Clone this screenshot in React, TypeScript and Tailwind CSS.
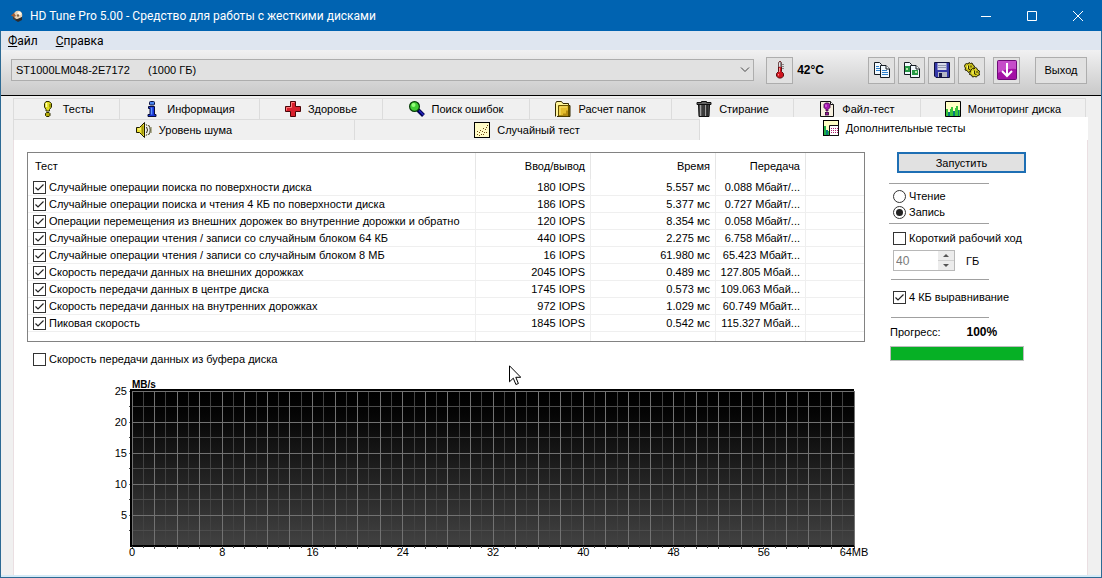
import React, { useState } from "react";

type IconProps = { children: React.ReactNode };

function Icon({ children }: IconProps) {
  return (
    <svg viewBox="0 0 16 16" aria-hidden="true" className="size-4 shrink-0">
      {children}
    </svg>
  );
}

const appIcon = (
  <Icon>
    <path d="M4 6 L8 3 L13 5 L13 11 L8 13 L4 11Z" fill="#4a4038" />
    <circle cx="9" cy="7" r="4.3" fill="#e9d2b4" />
    <circle cx="10.5" cy="5.5" r="2" fill="#fff6e6" />
    <circle cx="9" cy="7.5" r="1.2" fill="#7a6048" />
    <path d="M2 7.5 L5 5 L7 8 L5 9Z" fill="#a35d35" />
    <path d="M6 12 L13 9 L13 12 L9 14Z" fill="#2b2b2e" />
  </Icon>
);

const testIcon = (
  <Icon>
    <path d="M6 .5h3l2.500 2v3.500L9.500 8.500v1.500H6V8.500L4.500 6v-3.500Z" fill="#e0dc20" stroke="#2a2a00" />
    <path d="M6.500 2v4" stroke="#fffdb0" strokeWidth="1.500" />
    <path d="M10 3v3.500" stroke="#918c00" strokeWidth="1.500" />
    <path d="M5.500 12.500l1-1h2.500l1 1v2l-1 1h-2.500l-1-1Z" fill="#b6ac08" stroke="#2a2a00" />
  </Icon>
);

const infoIcon = (
  <Icon>
    <rect x="5.500" y=".5" width="5" height="3.500" rx="1" fill="#4a86f0" stroke="#0a1140" />
    <path d="M4.500 5.500h6v8h1.500v2h-8v-2h2v-6h-1.500Z" fill="#1836d8" stroke="#070d3a" />
    <path d="M7.500 6.500v7" stroke="#5e95ff" strokeWidth="1.500" />
  </Icon>
);

const healthIcon = (
  <Icon>
    <path d="M5.500 .5h5v5h5v5h-5v5h-5v-5h-5v-5h5Z" fill="#d8202c" stroke="#4a0508" />
    <path d="M6.500 6.500V1.500h3M1.500 9.500v-3h5" stroke="#ff7c7c" fill="none" />
  </Icon>
);

const searchIcon = (
  <Icon>
    <path d="M9 9l5.500 5.500" stroke="#000050" strokeWidth="4" />
    <path d="M10 9.500l4.500 4.500" stroke="#2525c0" strokeWidth="1.500" />
    <circle cx="5.500" cy="5.500" r="4.900" fill="#42ce35" stroke="#073b07" strokeWidth="1.200" />
    <circle cx="4.500" cy="4" r="2" fill="#94ff7b" />
  </Icon>
);

const folderIcon = (
  <Icon>
    <path d="M.5 15.500v-13l1-2h5l1.500 2h5.500v3" fill="#fff59a" stroke="#332900" />
    <path d="M13.500 4.500h1.500v11H2" fill="#8c7208" stroke="#332900" />
    <path d="M3.500 4.500h10v10.500H3.500Z" fill="#e3bd2e" stroke="#665100" />
    <path d="M5 14V6h7" fill="none" stroke="#fae574" />
    <path d="M8 13.500h4v-4" fill="none" stroke="#b48b12" strokeWidth="2" />
  </Icon>
);

const trashIcon = (
  <Icon>
    <path d="M2.500 3.500h11l-.5 12H3Z" fill="#4a4a4a" stroke="#111" />
    <path d="M5 4v11" stroke="#dcdcdc" strokeWidth="1.200" />
    <path d="M7 4v11" stroke="#8c8c8c" />
    <path d="M9.500 4v11" stroke="#a0a0a0" strokeWidth="1.500" />
    <path d="M6 4v11M8 4v11M11 4v11" stroke="#111" />
    <path d="M5.500 .5h5v1h4.500v2H1v-2h4.500Z" fill="#666" stroke="#111" />
  </Icon>
);

const fileTestIcon = (
  <Icon>
    <path d="M1.500 .5h10l3 3v12h-13Z" fill="#f7f0df" stroke="#111" />
    <path d="M11.500 .5v3h3" fill="#fff" stroke="#111" />
    <path d="M6.500 2h3l1.500 1.500v3l-2 2v1.500H7V8.500L5 6.500v-3Z" fill="#a51cae" stroke="#330038" strokeWidth=".8" />
    <path d="M7 3.500v2.500" stroke="#ed70f5" strokeWidth="1.200" />
    <rect x="6.500" y="11.500" width="3" height="2.500" fill="#961399" stroke="#330038" strokeWidth=".8" />
  </Icon>
);

const monitorIcon = (
  <Icon>
    <path d="M.5 .5h15v15h-15Z" fill="#ffffc4" />
    <path d="M1 15V8h2v3h2V8h1V6h2v4h2V7h1V5h2v4h2v6Z" fill="#38c53a" />
    <path d="M3 15v-4h2v4M8 15v-5h2v5M13 15V9h1v6" fill="#087b7b" />
    <path d="M.5 .5h15v15h-15Z" fill="none" stroke="#000" />
  </Icon>
);

const noiseIcon = (
  <Icon>
    <path d="M.5 5.500h3l5-5v15l-5-5h-3Z" fill="#eee235" stroke="#1c1900" />
    <path d="M6.500 3.500v9" stroke="#9c9108" strokeWidth="2" />
    <path d="M2 7h3" stroke="#ffffa8" />
    <path d="M10.500 5q2 3 0 6M12.500 3q3.500 5 0 10" fill="none" stroke="#302d10" />
    <path d="M10 2l1 2M10 14l1-2M15 5v6" stroke="#777442" />
  </Icon>
);

const randomIcon = (
  <Icon>
    <rect x=".5" y=".5" width="15" height="15" fill="#fffbc6" stroke="#000" />
    <path
      d="M3 12.500h1M5 10.500h1M7 12.500h1M8 9.500h1M10 10.500h1M11 7.500h1M12 5.500h1M5 13.500h1M3 9.500h1M9 12.500h1M12 10.500h1M6 8.500h1M13 3.500h1M9 6.500h1"
      stroke="#6e4812"
    />
  </Icon>
);

const extraIcon = (
  <Icon>
    <rect x=".5" y=".5" width="15" height="15" fill="#ffffc4" stroke="#000" />
    <path d="M1 15V6h2v5h3v4Z" fill="#20b345" />
    <path d="M3 15v-5h2v5Z" fill="#087b7b" />
    <path d="M6.500 5.500h9v10h-9Z" fill="#fff" stroke="#111" />
    <path d="M8 8.500h7M8 10.500h7M8 12.500h7" stroke="#b02070" strokeDasharray="1 1" />
  </Icon>
);

const thermometerIcon = (
  <svg viewBox="0 0 16 18" aria-hidden="true" className="h-[18px] w-4 shrink-0">
    <path d="M6.500 1.500l1-1h1l1 1v9l2 2v2.500l-2 2h-3l-2-2v-2.500l2-2Z" fill="#d0141e" stroke="#5b1114" />
    <path d="M6.500 1h3v5h-3Z" fill="#8b8b8b" />
    <path d="M7.500 1.500v4" stroke="#e4e4e4" />
    <path d="M7.500 7v4M6.500 13v1.500" stroke="#ff9292" />
    <path d="M10 3.500h2M10 5.500h2M10 7.500h2" stroke="#888" />
  </svg>
);

function Pages({ pictures }: { pictures: boolean }) {
  return (
    <Icon>
      <path d="M.5 .5h5l2 2v10h-7Z" fill="#f2faff" stroke="#151b22" />
      <path d="M6.500 3.500h5.500l3.500 3.500v8.500h-9Z" fill="#f2faff" stroke="#151b22" />
      <path d="M12 3.500V7h3.500" fill="#fff" stroke="#151b22" />
      {pictures ? (
        <>
          <path d="M1 4h5v6H1ZM8 8h6v5H8Z" fill="#279a47" />
          <path d="M2 6h2v2H2ZM11 9h2v2h-2Z" fill="#b6e8a8" />
        </>
      ) : (
        <path d="M2 4.500h3M2 6.500h4M2 8.500h4M8 8.500h5M8 10.500h6M8 12.500h6" stroke="#2f80cc" />
      )}
    </Icon>
  );
}

const saveIcon = (
  <Icon>
    <path d="M.5 .5h15v15h-13.500l-1.500-1.500Z" fill="#3538a8" stroke="#10103c" />
    <path d="M3.500 1h9v7h-9Z" fill="#d9dcea" />
    <path d="M4 3.500h8M4 5.500h8" stroke="#9298b0" />
    <path d="M4 10h9v5H4Z" fill="#b5b8c6" />
    <path d="M5 11h3v4H5Z" fill="#17174a" />
  </Icon>
);

const gearsIcon = (
  <Icon>
    <path
      d="M1 2.500l1.500-1L4 2l1-1.500 1.500 1L8 1l1 2 1.500 1-.5 2-.5 3-2 1-1.500-.5-1.500 1-1.500-2-2-.5.5-2-1-1.500Z"
      fill="#cbc21c"
      stroke="#242000"
    />
    <path
      d="M7 8l1.500-1.500L10 7l1.500-1.500 1.500 1 .5 1.500 2 1-.5 2 .5 2-2 .5-1 1.500-2-.5-2 .5-1-2-2-.5.5-2Z"
      fill="#d8cf20"
      stroke="#242000"
    />
    <path d="M4.500 3.500v3.500l2 1M10.500 8.500v3.500l2 .5M7 3.500v2M13 9v2" stroke="#302c00" fill="none" />
    <path d="M3.500 3.500v3M9 9v3" stroke="#fff770" />
  </Icon>
);

const downloadIcon = (
  <svg viewBox="0 0 20 20" aria-hidden="true" className="size-5 shrink-0">
    <rect x=".5" y=".5" width="19" height="19" rx="1" fill="#a312a5" stroke="#6d0b76" />
    <path d="M1 1h18v8Q10 8 1 13Z" fill="#c64cc9" />
    <path d="M10 3v13M5 11l5 5 5-5" fill="none" stroke="#fff" strokeWidth="2" />
  </svg>
);

const upperTabs = [
  { label: "Тесты", icon: testIcon },
  { label: "Информация", icon: infoIcon },
  { label: "Здоровье", icon: healthIcon },
  { label: "Поиск ошибок", icon: searchIcon },
  { label: "Расчет папок", icon: folderIcon },
  { label: "Стирание", icon: trashIcon },
  { label: "Файл-тест", icon: fileTestIcon },
  { label: "Мониторинг диска", icon: monitorIcon },
];

const lowerTabs = [
  { label: "Уровень шума", icon: noiseIcon },
  { label: "Случайный тест", icon: randomIcon },
];

const results = [
  ["Случайные операции поиска по поверхности диска", "180 IOPS", "5.557 мс", "0.088 Мбайт/..."],
  ["Случайные операции поиска и чтения 4 КБ по поверхности диска", "186 IOPS", "5.377 мс", "0.727 Мбайт/..."],
  ["Операции перемещения из внешних дорожек во внутренние дорожки и обратно", "120 IOPS", "8.354 мс", "0.058 Мбайт/..."],
  ["Случайные операции чтения / записи со случайным блоком 64 КБ", "440 IOPS", "2.275 мс", "6.758 Мбайт/..."],
  ["Случайные операции чтения / записи со случайным блоком 8 МБ", "16 IOPS", "61.980 мс", "65.423 Мбайт..."],
  ["Скорость передачи данных на внешних дорожках", "2045 IOPS", "0.489 мс", "127.805 Мбай..."],
  ["Скорость передачи данных в центре диска", "1745 IOPS", "0.573 мс", "109.063 Мбай..."],
  ["Скорость передачи данных на внутренних дорожках", "972 IOPS", "1.029 мс", "60.749 Мбайт..."],
  ["Пиковая скорость", "1845 IOPS", "0.542 мс", "115.327 Мбай..."],
];

function CheckBox({ label, checked = false }: { label: string; checked?: boolean }) {
  return (
    <label className="flex items-center gap-[3px] whitespace-nowrap">
      <span className="relative block size-[13px] shrink-0">
        <input
          type="checkbox"
          defaultChecked={checked}
          className="peer block size-[13px] appearance-none border border-[#333] bg-white"
        />
        <svg
          viewBox="0 0 13 13"
          aria-hidden="true"
          className="pointer-events-none absolute inset-0 hidden size-[13px] peer-checked:block"
        >
          <path d="M2.500 6.500l2.500 2.500 5.500-5.500" fill="none" stroke="#222" strokeWidth="1.200" />
        </svg>
      </span>
      {label}
    </label>
  );
}

function RadioButton({ label, checked = false }: { label: string; checked?: boolean }) {
  return (
    <label className="flex h-4 items-center gap-[3px]">
      <span className="relative block size-[13px] shrink-0">
        <input
          type="radio"
          name="mode"
          defaultChecked={checked}
          className="peer block size-[13px] appearance-none rounded-full border border-[#333] bg-white"
        />
        <span className="pointer-events-none absolute inset-[3px] hidden rounded-full bg-[#222] peer-checked:block" />
      </span>
      {label}
    </label>
  );
}

function ToolButton({ label, children }: { label: string; children: React.ReactNode }) {
  return (
    <button
      aria-label={label}
      className="flex size-[27px] items-center justify-center border border-[#adadad] bg-[#e1e1e1]"
    >
      {children}
    </button>
  );
}

function Tab({ label, icon }: { label: string; icon: React.ReactNode }) {
  return (
    <button
      role="tab"
      aria-selected="false"
      className="flex h-[21px] items-center justify-center gap-[7px] border-t border-r border-[#dcdcdc] bg-[#f0f0f0] whitespace-nowrap"
    >
      {icon}
      {label}
    </button>
  );
}

function Chart() {
  const columns = Array.from({ length: 65 }, (_, i) => i);
  const rows = Array.from({ length: 11 }, (_, i) => i);
  const minorColumns = columns.filter((i) => i % 2 === 1);
  const majorColumns = columns.filter((i) => i % 2 === 0);
  const at = (i: number, n: number) => `${(i / n) * 100}%`;
  return (
    <svg
      role="img"
      aria-label="MB/s"
      className="block h-[155px] w-full overflow-visible font-['Liberation_Sans',sans-serif] text-[11px]"
    >
      <defs>
        <linearGradient id="plot" x1="0" y1="0" x2="0" y2="1">
          <stop offset="0" stopColor="#000" />
          <stop offset=".15" stopColor="#050505" />
          <stop offset="1" stopColor="#424242" />
        </linearGradient>
      </defs>
      <g shapeRendering="crispEdges">
        <svg x="-1" y="-1" width="100%" height="100%" overflow="visible">
          <rect width="100%" height="100%" fill="#000" stroke="#000" strokeWidth="2" />
          <rect x="1" y="2" width="100%" height="100%" fill="#000" />
        </svg>
        <rect width="100%" height="100%" fill="url(#plot)" />
        {minorColumns.map((i) => (
          <line key={i} x1={at(i, 64)} x2={at(i, 64)} y1="0" y2="100%" stroke="#424242" />
        ))}
        {rows.filter((i) => i % 2 === 1).map((i) => (
          <line key={i} x1="-3" x2="100%" y1={at(i, 10)} y2={at(i, 10)} stroke="#4c4c4c" />
        ))}
        {majorColumns.map((i) => (
          <line key={i} x1={at(i, 64)} x2={at(i, 64)} y1="0" y2="100%" stroke="#727272" />
        ))}
        {rows.filter((i) => i % 2 === 0 && i < 10).map((i) => (
          <line key={i} x1="-3" x2="100%" y1={at(i, 10)} y2={at(i, 10)} stroke="#727272" />
        ))}
        <line x1="-1" x2="-1" y1="-2" y2="100%" stroke="#000" strokeWidth="2" />
        <svg y="100%" width="100%" height="4" overflow="visible">
          <line x1="-2" x2="100%" y1="0" y2="0" stroke="#000" strokeWidth="2" />
          {columns.map((i) => (
            <line key={i} x1={at(i, 64)} x2={at(i, 64)} y1="0" y2={i % 2 ? 2 : 3} stroke="#444" />
          ))}
        </svg>
      </g>
      <text x="0" y="-3" fontWeight="bold" fontSize="10">MB/s</text>
      {[25, 20, 15, 10, 5].map((n, i) => (
        <text key={n} x="-5" y={at(i, 5)} dy="4" textAnchor="end">{n}</text>
      ))}
      {[0, 8, 16, 24, 32, 40, 48, 56, 64].map((n) => (
        <text key={n} x={at(n, 64)} y="100%" dy="10" textAnchor="middle">
          {n === 64 ? "64MB" : n}
        </text>
      ))}
    </svg>
  );
}

export default function App() {
  const [size, setSize] = useState(40);
  return (
    <div className="relative flex min-h-screen flex-col border-r border-b border-l border-[#2d6a94] bg-[#f0f0f0] font-['Liberation_Sans',sans-serif] text-[11px] leading-4 text-black">
      <header className="-mx-px flex h-[31px] items-center bg-[#0063b1] pl-[9px] font-['Roboto',sans-serif] text-[12px] text-white">
        {appIcon}
        <h1 className="ml-[5px] flex-1 whitespace-nowrap">HD Tune Pro 5.00 - Средство для работы с жесткими дисками</h1>
        <button aria-label="Свернуть" className="flex h-full w-[46px] items-center justify-center">
          <svg viewBox="0 0 10 10" className="size-2.5"><path d="M0 5.500h10" stroke="#fff" /></svg>
        </button>
        <button aria-label="Развернуть" className="flex h-full w-[46px] items-center justify-center">
          <svg viewBox="0 0 10 10" className="size-2.5"><path d="M.5 .5h9v9h-9Z" stroke="#fff" fill="none" /></svg>
        </button>
        <button aria-label="Закрыть" className="mr-px flex h-full w-[46px] items-center justify-center">
          <svg viewBox="0 0 10 10" className="size-2.5"><path d="M0 0l10 10M10 0L0 10" stroke="#fff" /></svg>
        </button>
      </header>

      <nav className="flex h-[19px] items-center gap-[18px] bg-[#dfe6f0] pl-[7px] font-['Roboto',sans-serif] text-[12px]">
        <button><u>Ф</u>айл</button>
        <button><u>С</u>правка</button>
      </nav>

      <div className="flex h-[46px] items-center border-b border-black bg-linear-to-b from-[#f1f1f2] to-[#c9c9c9] pr-[14px] pb-[5px] pl-[10px]">
        <div className="relative flex-1">
          <select
            aria-label="Диск"
            className="block h-[22px] w-full appearance-none border border-[#adadad] bg-[#e1e1e1] px-1"
          >
            <option>{"ST1000LM048-2E7172\u00a0\u00a0\u00a0\u00a0\u00a0\u00a0(1000 ГБ)"}</option>
          </select>
          <svg viewBox="0 0 10 6" aria-hidden="true" className="pointer-events-none absolute top-2 right-1 h-1.5 w-2.5">
            <path d="M1 .5l4 4 4-4" fill="none" stroke="#444" />
          </svg>
        </div>
        <div className="ml-3 flex items-center gap-1">
          <ToolButton label="Температура">{thermometerIcon}</ToolButton>
          <span className="text-[12px] font-bold">42°C</span>
        </div>
        <div className="ml-11 flex gap-[3px]">
          <ToolButton label="Копировать текст"><Pages pictures={false} /></ToolButton>
          <ToolButton label="Копировать снимок"><Pages pictures /></ToolButton>
          <ToolButton label="Сохранить">{saveIcon}</ToolButton>
          <ToolButton label="Настройки">{gearsIcon}</ToolButton>
        </div>
        <div className="ml-2 flex gap-[15px]">
          <ToolButton label="Скачать">{downloadIcon}</ToolButton>
          <button className="h-[27px] w-[52px] border border-[#adadad] bg-[#e1e1e1]">Выход</button>
        </div>
      </div>

      <div className="flex flex-1 flex-col border-b-2 border-[#d5ebf7] pt-0.5 pr-[13px] pl-3">
        <div role="tablist">
          <div className="mr-0.5 grid grid-cols-[106fr_140fr_123fr_147fr_142fr_122fr_127fr_165fr] border-l border-[#dcdcdc]">
            {upperTabs.map((tab) => (
              <Tab key={tab.label} {...tab} />
            ))}
          </div>
          <div className="grid grid-cols-[341fr_345fr_388fr] border-l border-[#dcdcdc]">
            {lowerTabs.map((tab) => (
              <Tab key={tab.label} {...tab} />
            ))}
            <button
              role="tab"
              aria-selected="true"
              className="-mt-0.5 flex items-center justify-center gap-[7px] bg-white pb-0.5 whitespace-nowrap"
            >
              {extraIcon}
              {"Дополнительные тесты"}
            </button>
          </div>
        </div>

        <main className="flex flex-1 gap-6 border-r border-l border-[#eadfe2] bg-white pt-3 pr-[61px] pl-[13px]">
          <section className="min-w-0 flex-1">
            <div className="h-[190px] border border-[#828282]">
              <table className="w-full table-fixed border-separate border-spacing-0 whitespace-nowrap">
                <colgroup>
                  <col />
                  <col className="w-[115px]" />
                  <col className="w-[125px]" />
                  <col className="w-[90px]" />
                  <col className="w-[58px]" />
                </colgroup>
                <thead>
                  <tr className="h-[26px] [&>th]:border-r [&>th]:border-[#e6e6e6] [&>th]:p-0 [&>th]:font-normal [&>th:last-child]:border-0">
                    <th className="text-left"><span className="pl-[7px]">Тест</span></th>
                    <th className="text-right"><span className="pr-[5px]">Ввод/вывод</span></th>
                    <th className="text-right"><span className="pr-[5px]">Время</span></th>
                    <th className="text-right"><span className="pr-[5px]">Передача</span></th>
                    <th />
                  </tr>
                </thead>
                <tbody className="[&_td]:border-r [&_td]:border-[#efefef] [&_td:last-child]:border-r-0">
                  {results.map(([name, io, time, rate]) => (
                    <tr key={name} className="h-[17px] [&>td]:border-b [&>td]:p-0">
                      <td><div className="pl-[5px]"><CheckBox label={name} checked /></div></td>
                      <td className="text-right"><span className="pr-[5px]">{io}</span></td>
                      <td className="text-right"><span className="pr-[5px]">{time}</span></td>
                      <td className="text-right"><span className="pr-[5px]">{rate}</span></td>
                      <td />
                    </tr>
                  ))}
                  <tr aria-hidden="true" className="h-[9px] [&>td]:p-0">
                    <td /><td /><td /><td /><td />
                  </tr>
                </tbody>
              </table>
            </div>
            <div className="mt-[9px] pl-1.5">
              <CheckBox label="Скорость передачи данных из буфера диска" />
            </div>
            <div className="mt-6 mr-[11px] mb-6 ml-[105px]">
              <Chart />
            </div>
          </section>

          <aside className="w-[137px] shrink-0">
            <button className="ml-2 block h-[21px] w-[129px] border-2 border-[#1e6fb4] bg-[#e1e1e1] leading-4">
              Запустить
            </button>
            <fieldset className="mt-2.5 w-[100px] border-t border-b border-[#a0a0a0] pt-1 pb-[3px] pl-1">
              <RadioButton label="Чтение" />
              <RadioButton label="Запись" checked />
            </fieldset>
            <div className="mt-1.5 pl-1">
              <CheckBox label="Короткий рабочий ход" />
            </div>
            <div className="mt-1 flex items-center gap-[11px] pl-1">
              <div className="flex h-[21px] w-[62px] border border-[#b8b8b8] bg-white">
                <input
                  id="capacity"
                  type="text"
                  value={size}
                  readOnly
                  className="w-0 flex-1 pl-0.5 text-[12px] text-[#7a7a7a]"
                />
                <div className="flex w-4 flex-col bg-[#ececec]">
                  <button
                    aria-label="Увеличить"
                    onClick={() => setSize(size + 1)}
                    className="flex flex-1 items-center justify-center border-b border-[#d0d0d0]"
                  >
                    <svg viewBox="0 0 6 3" className="h-[3px] w-1.5"><path d="M0 3l3-3 3 3Z" fill="#555" /></svg>
                  </button>
                  <button
                    aria-label="Уменьшить"
                    onClick={() => setSize(Math.max(1, size - 1))}
                    className="flex flex-1 items-center justify-center"
                  >
                    <svg viewBox="0 0 6 3" className="h-[3px] w-1.5"><path d="M0 0l3 3 3-3Z" fill="#555" /></svg>
                  </button>
                </div>
              </div>
              <label htmlFor="capacity">ГБ</label>
            </div>
            <hr className="mt-2 ml-0.5 w-[98px] border-[#a0a0a0]" />
            <div className="mt-[9px] pl-1">
              <CheckBox label="4 КБ выравнивание" checked />
            </div>
            <hr className="mt-3 ml-0.5 w-[98px] border-[#a0a0a0]" />
            <div className="mt-1.5 flex items-center gap-[26px] pl-px">
              <span>Прогресс:</span>
              <span className="text-[12px] font-bold">100%</span>
            </div>
            <div
              role="progressbar"
              aria-label="Прогресс"
              aria-valuenow={100}
              className="mt-1.5 ml-px h-[15px] w-[134px] border border-[#bcbcbc] bg-[#e6e6e6]"
            >
              <div className="h-full w-full bg-[#06b025]" />
            </div>
          </aside>
        </main>
      </div>

      <svg
        viewBox="0 0 12 21"
        aria-hidden="true"
        className="pointer-events-none absolute top-[365px] left-[508px] h-[21px] w-3"
      >
        <path d="M.5 .8v16l3.800-3.600 2.600 6.300 2.500-1-2.600-6.200h5Z" fill="#fff" stroke="#000" />
      </svg>
    </div>
  );
}
